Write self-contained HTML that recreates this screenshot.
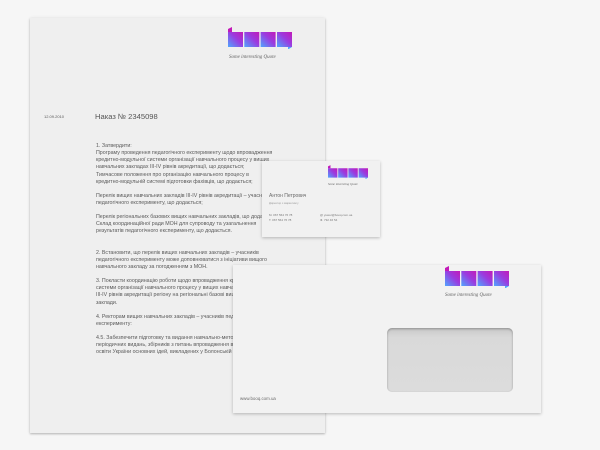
<!DOCTYPE html>
<html><head><meta charset="utf-8"><style>
*{margin:0;padding:0}
body{width:600px;height:450px;overflow:hidden;background:#f6f6f6;font-family:"Liberation Sans","DejaVu Sans",sans-serif;position:relative}
.abs{position:absolute}
.letter{left:30px;top:18px;width:295px;height:415px;background:#efefef;box-shadow:0 1px 2px rgba(0,0,0,.25),0 0 4px rgba(0,0,0,.06)}
.card{left:262px;top:161px;width:118px;height:76px;background:#f1f1f1;box-shadow:0 1px 3px rgba(0,0,0,.25)}
.env{left:233px;top:265px;width:308px;height:148px;background:#f2f2f2;box-shadow:0 1px 3px rgba(0,0,0,.25)}
.win{left:154px;top:63px;width:126px;height:64px;border-radius:5px;background:linear-gradient(180deg,#c9c9c9,#d9d9d9 15%,#dcdcdc);box-shadow:inset 0 1px 2px rgba(0,0,0,.3)}
.t{position:absolute;white-space:nowrap;color:#5a5a5a;font-size:5.3px;line-height:6px}
.q{position:absolute;font-family:"Liberation Serif",serif;font-style:italic;color:#666;white-space:nowrap}
</style></head><body>
<svg width="0" height="0" style="position:absolute"><defs>
<linearGradient id="g" x1="1" y1="0" x2="0" y2="1"><stop offset="0" stop-color="#c21ab8"/><stop offset=".45" stop-color="#9a3ce0"/><stop offset="1" stop-color="#4fa6ff"/></linearGradient>
<symbol id="logo" viewBox="0 0 64 22">
<polygon points="0,5 0,2 4,0 4,5" fill="#c21ab8"/>
<rect x="0" y="5" width="15" height="15" fill="url(#g)"/>
<rect x="16.3" y="5" width="15" height="15" fill="url(#g)"/>
<rect x="32.6" y="5" width="15" height="15" fill="url(#g)"/>
<rect x="49" y="5" width="15" height="15" fill="url(#g)"/>
<polygon points="60,20 64,20 60,22.5" fill="#4fa6ff"/>
</symbol></defs></svg>

<div class="abs letter">
<svg class="abs" style="left:198px;top:9px" width="64" height="22"><use href="#logo"/></svg>
<div class="q" style="left:199px;top:37px;font-size:5px">Some interesting Quote</div>
<div class="t" style="left:14px;top:96px;font-size:4px">12.09.2010</div>
<div class="t" style="left:65px;top:94px;font-size:7.6px;line-height:9px;color:#555">Наказ № 2345098</div>
<div class="t" style="left:66px;top:125px">1. Затвердити:</div>
<div class="t" style="left:66px;top:132px">Програму проведення педагогічного експерименту щодо впровадження</div>
<div class="t" style="left:66px;top:139px">кредитно-модульної системи організації навчального процесу у вищих</div>
<div class="t" style="left:66px;top:146px">навчальних закладах III-IV рівнів акредитації, що додається;</div>
<div class="t" style="left:66px;top:154px">Тимчасове положення про організацію навчального процесу в</div>
<div class="t" style="left:66px;top:161px">кредитно-модульній системі підготовки фахівців, що додається;</div>
<div class="t" style="left:66px;top:175px">Перелік вищих навчальних закладів III-IV рівнів акредитації – учасників</div>
<div class="t" style="left:66px;top:182px">педагогічного експерименту, що додається;</div>
<div class="t" style="left:66px;top:196px">Перелік регіональних базових вищих навчальних закладів, що додається;</div>
<div class="t" style="left:66px;top:203px">Склад координаційної ради МОН для супроводу та узагальнення</div>
<div class="t" style="left:66px;top:210px">результатів педагогічного експерименту, що додається.</div>
<div class="t" style="left:66px;top:232px">2. Встановити, що перелік вищих навчальних закладів – учасників</div>
<div class="t" style="left:66px;top:239px">педагогічного експерименту може доповнюватися з ініціативи вищого</div>
<div class="t" style="left:66px;top:246px">навчального закладу за погодженням з МОН.</div>
<div class="t" style="left:66px;top:260px">3. Покласти координацію роботи щодо впровадження кредитно-модульної</div>
<div class="t" style="left:66px;top:267px">системи організації навчального процесу у вищих навчальних закладах</div>
<div class="t" style="left:66px;top:274px">III-IV рівнів акредитації регіону на регіональні базові вищі навчальні</div>
<div class="t" style="left:66px;top:282px">заклади.</div>
<div class="t" style="left:66px;top:296px">4. Ректорам вищих навчальних закладів – учасників педагогічного</div>
<div class="t" style="left:66px;top:303px">експерименту:</div>
<div class="t" style="left:66px;top:317px">4.5. Забезпечити підготовку та видання навчально-методичних посібників</div>
<div class="t" style="left:66px;top:324px">періодичних видань, збірників з питань впровадження в систему вищої</div>
<div class="t" style="left:66px;top:331px">освіти України основних ідей, викладених у Болонській декларації.</div>
</div>

<div class="abs card">
<svg class="abs" style="left:66px;top:4px" width="40" height="14"><use href="#logo"/></svg>
<div class="q" style="left:66px;top:21px;font-size:3.2px">Some interesting Quote</div>
<div class="t" style="left:7px;top:32px;font-size:5px;color:#6a6a6a">Антон Петрович</div>
<div class="t" style="left:7px;top:39px;font-size:2.8px;color:#999">Директор з маркетингу</div>
<div class="t" style="left:7px;top:51px;font-size:3px;color:#777">M. 067 564 76 78</div>
<div class="t" style="left:7px;top:56px;font-size:3px;color:#777">T. 067 564 76 78</div>
<div class="t" style="left:58px;top:51px;font-size:3px;color:#777">@ yuwer@booq.com.ua</div>
<div class="t" style="left:58px;top:56px;font-size:3px;color:#777">Ф. 732 46 54</div>
</div>

<div class="abs env">
<svg class="abs" style="left:212px;top:1px" width="64" height="22"><use href="#logo"/></svg>
<div class="q" style="left:212px;top:28px;font-size:5px">Some interesting Quote</div>
<div class="abs win"></div>
<div class="t" style="left:7px;top:131px;font-size:4.4px;color:#6a6a6a">www.booq.com.ua</div>
</div>
</body></html>
